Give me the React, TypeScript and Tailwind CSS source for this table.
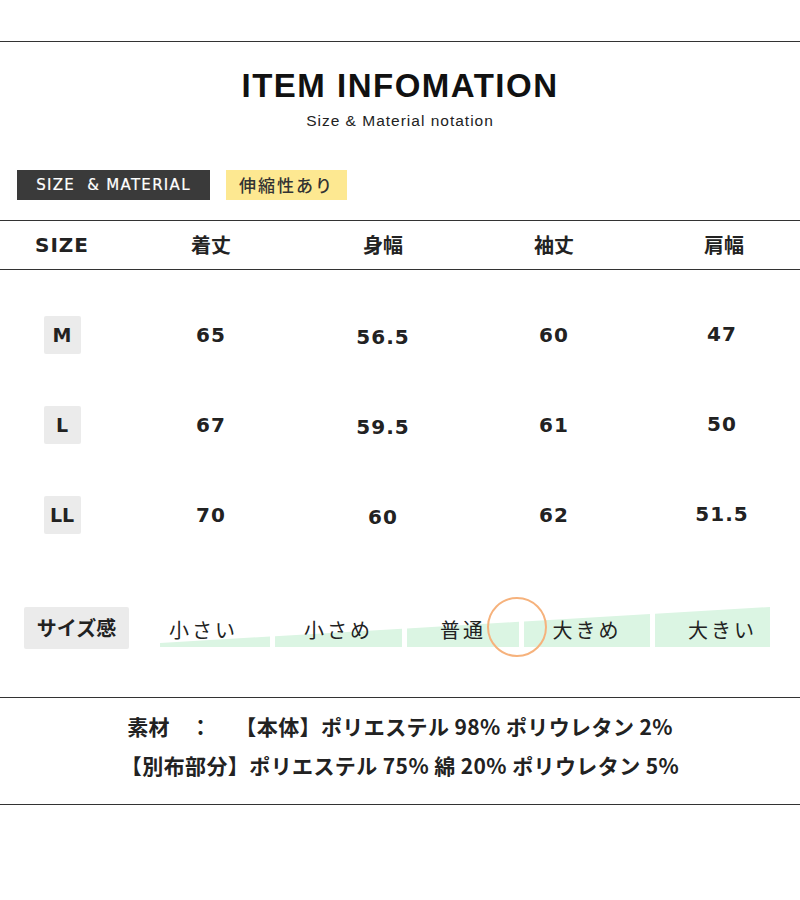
import React from "react";

const jp = "font-['Noto_Sans_CJK_JP',sans-serif]";
const latin = "font-['DejaVu_Sans',sans-serif]";

const cols = "grid grid-cols-[124px_174px_170px_172px_160px]";

const rows = [
  { size: "M", values: ["65", "56.5", "60", "47"] },
  { size: "L", values: ["67", "59.5", "61", "50"] },
  { size: "LL", values: ["70", "60", "62", "51.5"] },
];

// small nudges per column, as in the original sheet
const nudge = ["", "translate-y-[2px]", "", "translate-y-[-1px] translate-x-[2px]"];

// wedge segments along the size-feel scale (x ranges inside a 610px strip)
const segments: [number, number][] = [
  [0, 110],
  [115, 242],
  [247, 359],
  [364, 490],
  [495, 610],
];
const wedgeTop = (x: number) => 42 - (4 + 0.059 * x);

const feelLabels = [
  { text: "小さい", cls: "w-[110px] pl-[9px]" },
  { text: "小さめ", cls: "w-[127px] ml-[5px] justify-center" },
  { text: "普通", cls: "w-[112px] ml-[5px] justify-center" },
  { text: "大きめ", cls: "w-[126px] ml-[5px] justify-center" },
  { text: "大きい", cls: "w-[115px] ml-[5px] pl-[33px]" },
];

export default function App() {
  return (
    <div className="w-[800px] h-[900px] bg-white text-[#222]">
      <div className="h-[41px]" />
      <div className="border-t border-[#333]" />

      <h1 className="mt-[27px] text-center text-[33px] leading-[33px] font-bold tracking-[1.5px] text-[#111] font-['Liberation_Sans',sans-serif]">
        ITEM INFOMATION
      </h1>
      <p className="mt-[9px] text-center text-[15.5px] leading-[20px] tracking-[1px] text-[#222] font-['Liberation_Sans',sans-serif]">
        Size &amp; Material notation
      </p>

      <div className="mt-[39px] flex items-center pl-[17px] gap-[16px]">
        <div className={`h-[30px] w-[193px] bg-[#3a3a3a] text-white flex items-center justify-center text-[15px] tracking-[1.3px] [-webkit-text-stroke:0.2px_white] ${latin}`}>
          SIZE&nbsp;&nbsp;&amp; MATERIAL
        </div>
        <div className={`h-[30px] w-[121px] bg-[#fde891] text-[#333] flex items-center justify-center text-[17px] font-medium tracking-[2px] ${jp}`}>
          伸縮性あり
        </div>
      </div>

      <div className={`mt-[20px] h-[50px] border-y border-[#333] ${cols} items-center`}>
        <div className={`text-center text-[20px] font-bold tracking-[1px] text-[#222] ${latin}`}>SIZE</div>
        {["着丈", "身幅", "袖丈", "肩幅"].map((h, i) => (
          <div key={h} className={`text-center text-[20px] font-bold text-[#222] ${i === 3 ? "translate-x-[4px]" : ""} ${jp}`}>
            {h}
          </div>
        ))}
      </div>

      <div className="pt-[20px]">
        {rows.map((r) => (
          <div key={r.size} className={`${cols} h-[90px] items-center`}>
            <div className="flex justify-center">
              <div className={`w-[37px] h-[38px] rounded-[2px] bg-[#ebebeb] flex items-center justify-center text-[19px] font-bold text-[#222] ${latin}`}>
                {r.size}
              </div>
            </div>
            {r.values.map((v, i) => (
              <div key={i} className={`text-center text-[20px] font-bold tracking-[1px] text-[#222] ${nudge[i]} ${latin}`}>
                {v}
              </div>
            ))}
          </div>
        ))}
      </div>

      <div className="mt-[38px] h-[60px] flex items-center">
        <div className={`ml-[24px] w-[105px] h-[42px] rounded-[2px] bg-[#ebebeb] flex items-center justify-center text-[20px] font-bold text-[#222] ${jp}`}>
          サイズ感
        </div>
        <div className="relative ml-[31px] w-[610px] h-[60px]">
          <svg className="absolute left-0 top-[7px]" width="610" height="42" viewBox="0 0 610 42">
            {segments.map(([a, b], i) => (
              <polygon
                key={i}
                fill="#dbf5e3"
                points={`${a},${wedgeTop(a)} ${b},${wedgeTop(b)} ${b},42 ${a},42`}
              />
            ))}
          </svg>
          <div className={`relative flex h-full items-center pt-[3px] text-[20px] tracking-[3px] text-[#222] ${jp}`}>
            {feelLabels.map((l) => (
              <div key={l.text} className={`flex ${l.cls}`}>
                {l.text}
              </div>
            ))}
          </div>
          <div className="absolute left-[327px] top-[-1px] w-[60px] h-[60px] rounded-full border-2 border-[#f6b27c]" />
        </div>
      </div>

      <div className={`mt-[39px] border-y border-[#333] pt-[9px] pb-[19px] text-center text-[21px] font-bold tracking-[0.4px] text-[#222] ${jp}`}>
        <div className="leading-[39px]">
          素材<span className="inline-block w-[20px]" />：<span className="inline-block w-[24px]" />【本体】ポリエステル 98% ポリウレタン 2%
        </div>
        <div className="leading-[39px]">【別布部分】ポリエステル 75% 綿 20% ポリウレタン 5%</div>
      </div>
    </div>
  );
}
